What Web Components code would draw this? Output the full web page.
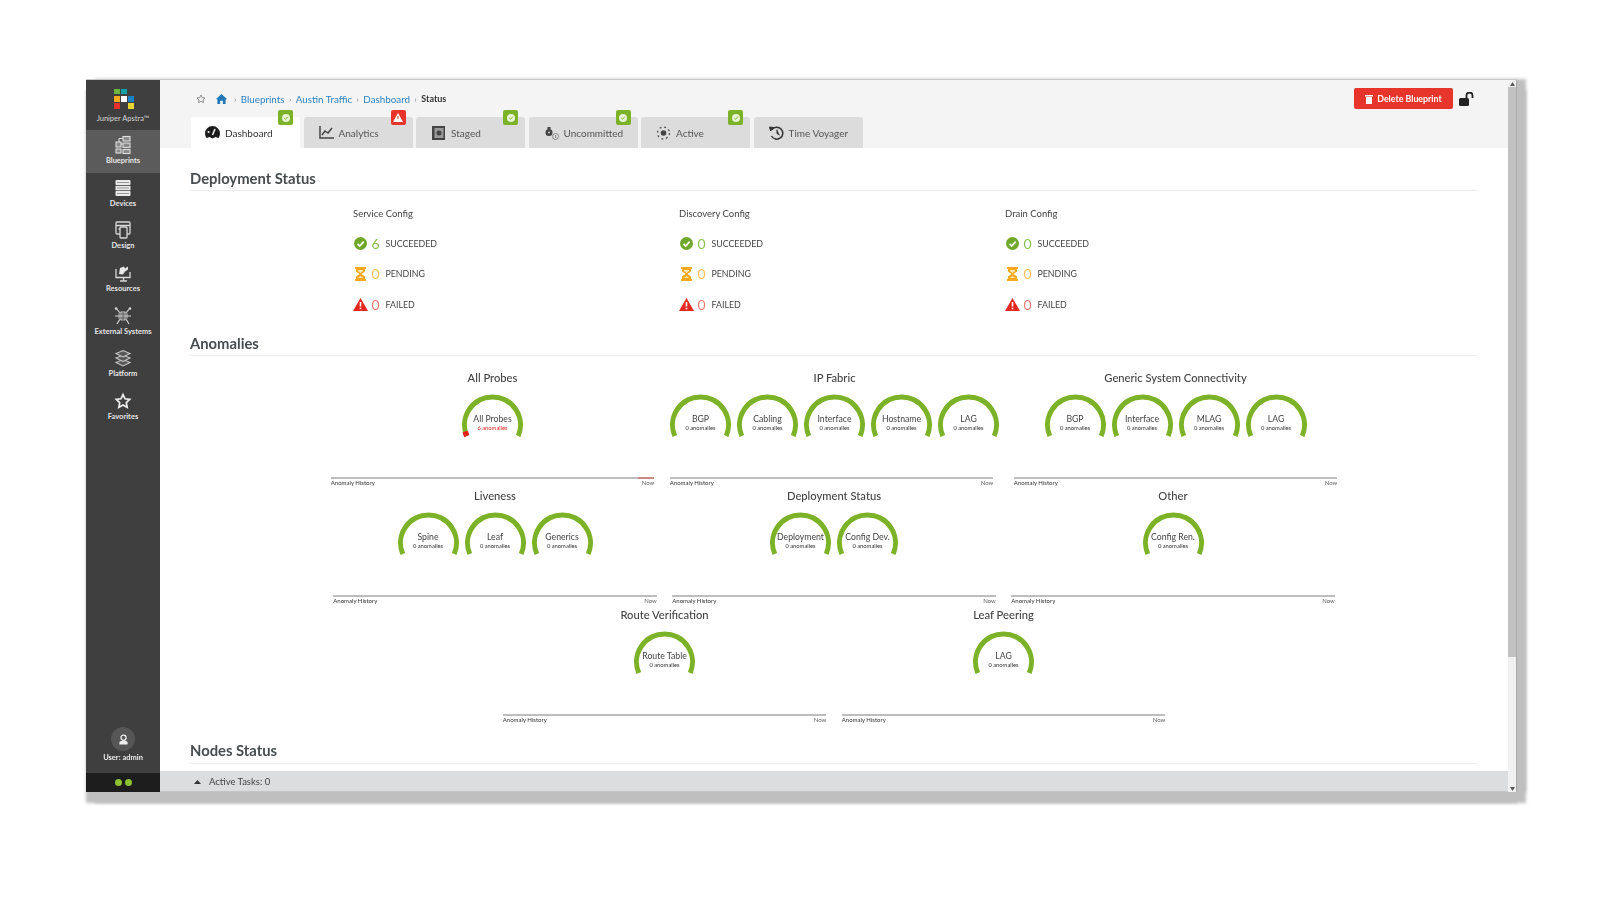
<!DOCTYPE html>
<html>
<head>
<meta charset="utf-8">
<title>Status</title>
<style>
  html, body { margin: 0; background: #fff; }
  body { font-family: Lato, "Open Sans", sans-serif; color: #3f4446; height: 900px; overflow: hidden; }
</style>
</head>
<body>
<app-shell>
  <side-nav slot="nav"></side-nav>
  <top-bar slot="top"></top-bar>
  <section-head>Deployment Status</section-head>
  <deploy-grid>
    <deploy-col title="Service Config" ok="6"></deploy-col>
    <deploy-col title="Discovery Config" ok="0"></deploy-col>
    <deploy-col title="Drain Config" ok="0"></deploy-col>
  </deploy-grid>
  <section-head class="anomalies">Anomalies</section-head>
  <anomaly-row>
    <anomaly-group title="All Probes" flagged>
      <an-gauge label="All Probes" sub="6 anomalies" alarm></an-gauge>
    </anomaly-group>
    <anomaly-group title="IP Fabric" shift>
      <an-gauge label="BGP"></an-gauge>
      <an-gauge label="Cabling"></an-gauge>
      <an-gauge label="Interface"></an-gauge>
      <an-gauge label="Hostname"></an-gauge>
      <an-gauge label="LAG"></an-gauge>
    </anomaly-group>
    <anomaly-group title="Generic System Connectivity" style="margin-left:5px">
      <an-gauge label="BGP"></an-gauge>
      <an-gauge label="Interface"></an-gauge>
      <an-gauge label="MLAG"></an-gauge>
      <an-gauge label="LAG"></an-gauge>
    </anomaly-group>
  </anomaly-row>
  <anomaly-row>
    <anomaly-group title="Liveness">
      <an-gauge label="Spine"></an-gauge>
      <an-gauge label="Leaf"></an-gauge>
      <an-gauge label="Generics"></an-gauge>
    </anomaly-group>
    <anomaly-group title="Deployment Status">
      <an-gauge label="Deployment"></an-gauge>
      <an-gauge label="Config Dev."></an-gauge>
    </anomaly-group>
    <anomaly-group title="Other">
      <an-gauge label="Config Ren."></an-gauge>
    </anomaly-group>
  </anomaly-row>
  <anomaly-row>
    <anomaly-group title="Route Verification">
      <an-gauge label="Route Table"></an-gauge>
    </anomaly-group>
    <anomaly-group title="Leaf Peering">
      <an-gauge label="LAG"></an-gauge>
    </anomaly-group>
  </anomaly-row>
  <section-head class="nodes">Nodes Status</section-head>
  <tasks-bar slot="bottom"></tasks-bar>
</app-shell>

<script>
class AppShell extends HTMLElement {
  connectedCallback() {
    this.attachShadow({ mode: 'open' });
    this.shadowRoot.innerHTML = `
      <style>
        :host {
          display: flex;
          width: 1431px;
          height: 713px;
          margin: 79px 0 0 86px;
          box-sizing: border-box;
          background: #fff;
          border-top: 1px solid #c9c9c9;
          box-shadow: 9px 0 3px #bfbfbf, 0 11px 3px #bfbfbf, 9px 11px 3px #bfbfbf;
          filter: blur(0.6px);
        }
        .main {
          flex: 1;
          min-width: 0;
          display: flex;
          flex-direction: column;
        }
        .content {
          flex: 1;
          overflow: hidden;
          padding: 20px 30px 0;
        }
        .scroll {
          width: 9px;
          box-sizing: border-box;
          background: #f1f1f1;
          border-right: 1px solid #a9a9a9;
          display: flex;
          flex-direction: column;
          align-items: center;
        }
        .arrow {
          height: 7px;
          flex: none;
          display: flex;
          align-items: center;
          justify-content: center;
        }
        .thumb { width: 100%; height: 570px; background: #c1c1c1; }
        .rest { flex: 1; }
      </style>
      <slot name="nav"></slot>
      <div class="main">
        <slot name="top"></slot>
        <div class="content"><slot></slot></div>
        <slot name="bottom"></slot>
      </div>
      <div class="scroll">
        <div class="arrow"><svg width="5" height="4" viewBox="0 0 5 4"><path d="M2.5 0 5 4H0z" fill="#555"/></svg></div>
        <div class="thumb"></div>
        <div class="rest"></div>
        <div class="arrow"><svg width="5" height="4" viewBox="0 0 5 4"><path d="M0 0h5L2.5 4z" fill="#555"/></svg></div>
      </div>
    `;
  }
}
customElements.define('app-shell', AppShell);

const navIcons = {
  blueprints: `<g fill="#8a8a8a" stroke="#dedede" stroke-width="1.100"><rect x="3" y="7" width="5" height="5"/><rect x="10" y="1.500" width="7" height="4.500"/><rect x="10" y="8" width="7" height="4.500"/><rect x="10" y="14.500" width="7" height="4"/><rect x="3" y="14" width="5" height="4"/><path d="M8 9h2M6 3.500h4M6 3.500v3.500" fill="none"/></g>`,
  devices: `<g fill="#e8e8e8"><rect x="2.500" y="2" width="15" height="5" rx="1"/><rect x="2.500" y="7.800" width="15" height="4.500"/><rect x="2.500" y="13" width="15" height="5" rx="1"/></g><path d="M4 4.500h12M4 10h12M4 15.500h12" stroke="#777" stroke-width=".7"/>`,
  design: `<g fill="none" stroke="#d8d8d8" stroke-width="1.300"><rect x="3" y="2" width="14" height="12" rx="1"/><rect x="7" y="7" width="7" height="11" rx="1" fill="#3f3f3f"/><path d="M3 5.500h14M5.500 9h1.500"/></g>`,
  resources: `<g fill="none" stroke="#d8d8d8" stroke-width="1.300"><path d="M3 6v8.500h14V9M7 18h7M10.500 14.500V18"/></g><path d="M6 11l1-6 4-1.500 1 2 3-2v3l-3 2-2 3z" fill="#e8e8e8"/>`,
  external: `<g stroke="#d8d8d8" stroke-width="1.200" fill="none"><path d="M3 2l4 5M17 2l-4 5M2 10h4M18 10h-4M4 18l3-5M16 18l-3-5"/></g><circle cx="10" cy="10" r="5" fill="#a8a8a8"/><path d="M6 8h8M6 12h8M10 5v10" stroke="#555" stroke-width=".8"/><circle cx="3" cy="2.500" r="1.200" fill="#ddd"/><circle cx="17" cy="2.500" r="1.200" fill="#ddd"/>`,
  platform: `<g fill="#5a5a5a" stroke="#c8c8c8" stroke-width="1.100"><path d="M10 11.500l7 3-7 3.500-7-3.500z"/><path d="M10 7l7 3-7 3.500L3 10z"/><path d="M10 2.500l7 3-7 3.500-7-3.500z"/></g>`,
  favorites: `<path d="M10 3.500l2 4.300 4.700.6-3.400 3.200.9 4.700-4.200-2.300-4.200 2.300.9-4.700-3.400-3.200 4.700-.6z" fill="none" stroke="#eee" stroke-width="1.700"/>`
};

class SideNav extends HTMLElement {
  connectedCallback() {
    this.attachShadow({ mode: 'open' });
    const items = [
      ['blueprints', 'Blueprints'], ['devices', 'Devices'], ['design', 'Design'],
      ['resources', 'Resources'], ['external', 'External Systems'], ['platform', 'Platform'], ['favorites', 'Favorites']
    ];
    this.shadowRoot.innerHTML = `
      <style>
        :host {
          display: flex;
          flex-direction: column;
          width: 74px;
          height: 100%;
          flex: none;
          background: #3f3f3f;
          color: #e6e6e6;
          font-size: 7.500px;
          font-weight: 700;
          text-align: center;
        }
        .logo {
          height: 50.300px;
          display: flex;
          flex-direction: column;
          align-items: center;
          padding-top: 9px;
          box-sizing: border-box;
          color: #d5d5d5;
          font-size: 7.500px;
          font-weight: 400;
          gap: 5px;
        }
        .logo svg { margin-left: 1px; }
        .item {
          height: 42.650px;
          display: flex;
          flex-direction: column;
          align-items: center;
          justify-content: flex-end;
          padding-bottom: 8px;
          box-sizing: border-box;
        }
        .item.active { background: #5b5b5b; }
        .item svg { margin-bottom: 1px; }
        svg { display: block; }
        .spacer { flex: 1; }
        .user {
          display: flex;
          flex-direction: column;
          align-items: center;
          gap: 2px;
          padding-bottom: 11px;
          color: #eee;
        }
        .avatar {
          width: 24px;
          height: 24px;
          border-radius: 50%;
          background: #565656;
          display: flex;
          align-items: center;
          justify-content: center;
        }
        .status {
          height: 19px;
          background: #1d1d1d;
          display: flex;
          align-items: center;
          justify-content: center;
          gap: 3px;
        }
        .status i { width: 7px; height: 7px; border-radius: 50%; background: #8cc230; }
      </style>
      <div class="logo">
        <svg width="20" height="20" viewBox="0 0 20 20">
          <rect x="0" y="0" width="6" height="5" fill="#6db33f"/><rect x="7" y="0" width="6" height="5" fill="#11a3a8"/>
          <rect x="0" y="7" width="6" height="6" fill="#f7a81b"/><rect x="7" y="7" width="6" height="6" fill="#fff"/><rect x="14" y="7" width="6" height="6" fill="#1a82c4"/>
          <rect x="0" y="14" width="6" height="6" fill="#e5312b"/><rect x="14" y="14" width="6" height="6" fill="#e8d52f"/>
        </svg>
        <span>Juniper Apstra™</span>
      </div>
      ${items.map(([k, label], i) => `
        <div class="item ${i === 0 ? 'active' : ''}">
          <svg width="20" height="20" viewBox="0 0 20 20">${navIcons[k]}</svg>
          <span>${label}</span>
        </div>`).join('')}
      <div class="spacer"></div>
      <div class="user">
        <div class="avatar">
          <svg width="11" height="11" viewBox="0 0 12 12"><circle cx="6" cy="4" r="2.800" fill="none" stroke="#eee" stroke-width="1.400"/><path d="M1.500 11.500V9.500q0-2 2-2h5q2 0 2 2v2z" fill="#eee"/></svg>
        </div>
        <span>User: admin</span>
      </div>
      <div class="status"><i></i><i></i></div>
    `;
  }
}
customElements.define('side-nav', SideNav);

class TopBar extends HTMLElement {
  connectedCallback() {
    this.attachShadow({ mode: 'open' });
    this.shadowRoot.innerHTML = `
      <style>
        :host {
          display: block;
          height: 68px;
          background: #f4f4f4;
          font-size: 9.800px;
        }
        .head {
          display: flex;
          align-items: center;
          justify-content: space-between;
          height: 21px;
          padding: 8px 33px 0 36px;
        }
        .crumbs { display: flex; align-items: center; color: #2b83bf; }
        .crumbs svg { display: block; }
        .sep { color: #777; margin: 0 4.500px; font-size: 8px; }
        .sep.first { margin-left: 7px; }
        .crumbs .now { color: #333; font-weight: 700; font-size: 9px; }
        .star { margin-right: 10px; }
        .right { display: flex; align-items: center; gap: 6px; }
        button {
          width: 99px;
          height: 21px;
          border: 0;
          border-radius: 2px;
          background: #e8352b;
          color: #fff;
          font: 700 8.800px Lato, sans-serif;
          display: flex;
          align-items: center;
          justify-content: center;
          gap: 4px;
          padding: 0;
        }
        .tabs {
          display: flex;
          gap: 3.500px;
          margin: 8px 0 0 31px;
        }
      </style>
      <div class="head">
        <div class="crumbs">
          <svg class="star" width="10" height="10" viewBox="0 0 20 20"><path d="M10 2l2.400 5.200 5.600.7-4.100 3.900 1.100 5.600L10 14.600l-5 2.800 1.100-5.600L2 7.900l5.600-.7z" fill="none" stroke="#777" stroke-width="1.600"/></svg>
          <svg width="11" height="10" viewBox="0 0 12 11"><path d="M6 0 12 5.500 10.500 6V11H7.500V7.500h-3V11h-3V6L0 5.500z" fill="#1f78b8"/></svg>
          <span class="sep first">›</span><span>Blueprints</span>
          <span class="sep">›</span><span>Austin Traffic</span>
          <span class="sep">›</span><span>Dashboard</span>
          <span class="sep">›</span><span class="now">Status</span>
        </div>
        <div class="right">
          <button>
            <svg width="8" height="10" viewBox="0 0 8 10"><path d="M0 1h8v1.500H0zM1 3h6v7H1z" fill="#fff"/></svg>
            Delete Blueprint
          </button>
          <svg width="16" height="14" viewBox="0 0 16 14"><rect x="0" y="6" width="10" height="8" rx="1.500" fill="#222"/><path d="M7.500 6V3.500a3 3 0 0 1 6 0V6" fill="none" stroke="#222" stroke-width="1.800"/></svg>
        </div>
      </div>
      <div class="tabs">
        <tab-item active badge="ok" label="Dashboard">
          <svg width="15" height="13" viewBox="0 0 15 13"><path d="M0 7.500a7.500 7.500 0 0 1 15 0q0 2.500-1.500 4.500l-3-1-3 1.500-3-1.500L1.500 12Q0 10 0 7.500z" fill="#1c1c1c"/><path d="M7.500 9 10 3" stroke="#fff" stroke-width="1.500"/><circle cx="3.500" cy="6" r="1" fill="#fff"/></svg>
        </tab-item>
        <tab-item badge="bad" label="Analytics">
          <svg width="15" height="13" viewBox="0 0 15 13"><path d="M1 0v12h14" fill="none" stroke="#444" stroke-width="1.500"/><path d="M3 9l3-4 3 2 4-5" fill="none" stroke="#444" stroke-width="1.500"/></svg>
        </tab-item>
        <tab-item badge="ok" label="Staged">
          <svg width="15" height="14" viewBox="0 0 15 14"><rect x="1" y="0" width="13" height="14" fill="#444"/><rect x="3.500" y="2" width="9" height="10" fill="#999"/><circle cx="8" cy="7" r="2.500" fill="#444"/></svg>
        </tab-item>
        <tab-item badge="ok" label="Uncommitted">
          <svg width="15" height="14" viewBox="0 0 15 14"><circle cx="5" cy="6.500" r="3.500" fill="#444"/><rect x="3.500" y="1" width="3" height="2.500" fill="#444"/><circle cx="5" cy="6.500" r="1" fill="#ccc"/><circle cx="11.500" cy="10.500" r="3" fill="none" stroke="#888"/><path d="M11.500 9v3" stroke="#888"/></svg>
        </tab-item>
        <tab-item badge="ok" label="Active">
          <svg width="15" height="14" viewBox="0 0 15 14"><circle cx="7.500" cy="7" r="2.800" fill="#444"/><circle cx="7.500" cy="7" r="6" fill="none" stroke="#555" stroke-width="1.300" stroke-dasharray="2 2.700"/></svg>
        </tab-item>
        <tab-item label="Time Voyager">
          <svg width="15" height="14" viewBox="0 0 15 14"><path d="M3 3.500A6 6 0 1 1 2.500 10" fill="none" stroke="#333" stroke-width="1.500"/><path d="M0.500 1 5 1.500 1.500 5zM8 3.500V7.500L10.500 9" fill="#333" stroke="#333" stroke-width="1"/></svg>
        </tab-item>
      </div>
    `;
  }
}
customElements.define('top-bar', TopBar);

class TabItem extends HTMLElement {
  connectedCallback() {
    this.attachShadow({ mode: 'open' });
    const badge = this.getAttribute('badge');
    const glyph = badge === 'bad'
      ? `<svg width="10" height="9" viewBox="0 0 10 9"><path d="M5 0l5 9H0z" fill="#fff"/><path d="M5 3v3" stroke="#e8352b"/></svg>`
      : `<svg width="8" height="8" viewBox="0 0 8 8"><circle cx="4" cy="4" r="4" fill="#e9f3d6"/><path d="M2.200 4l1.300 1.300 2.300-2.500" fill="none" stroke="#7cb228"/></svg>`;
    this.shadowRoot.innerHTML = `
      <style>
        :host {
          display: flex;
          align-items: center;
          position: relative;
          width: 109px;
          height: 31px;
          box-sizing: border-box;
          padding: 0 0 0 15px;
          gap: 5px;
          background: #dcdcdc;
          border-radius: 3px 3px 0 0;
          font-size: 10px;
          color: #555;
        }
        :host([active]) { background: #fff; padding-left: 14px; color: #333; }
        .badge {
          position: absolute;
          top: -7px;
          right: 7px;
          width: 15px;
          height: 15px;
          border-radius: 2px;
          background: ${badge === 'bad' ? '#e8352b' : '#7cb228'};
          display: flex;
          align-items: center;
          justify-content: center;
        }
      </style>
      <slot></slot><span>${this.getAttribute('label')}</span>
      ${badge ? `<div class="badge">${glyph}</div>` : ''}
    `;
  }
}
customElements.define('tab-item', TabItem);

class SectionHead extends HTMLElement {
  connectedCallback() {
    this.attachShadow({ mode: 'open' });
    this.shadowRoot.innerHTML = `
      <style>
        :host {
          display: block;
          font-size: 14.800px;
          font-weight: 700;
          line-height: 20px;
          padding-bottom: 2px;
          border-bottom: 1px solid #ededed;
          color: #474c4f;
        }
        :host(.anomalies) { margin-top: 13px; margin-bottom: 12px; }
        :host(.nodes) { margin-top: 17px; padding-bottom: 3px; }
      </style>
      <slot></slot>
    `;
  }
}
customElements.define('section-head', SectionHead);

class DeployGrid extends HTMLElement {
  connectedCallback() {
    this.attachShadow({ mode: 'open' });
    this.shadowRoot.innerHTML = `
      <style>
        :host {
          display: grid;
          grid-template-columns: repeat(3, 326px);
          padding: 15px 0 0 163px;
        }
      </style>
      <slot></slot>
    `;
  }
}
customElements.define('deploy-grid', DeployGrid);

class DeployCol extends HTMLElement {
  connectedCallback() {
    this.attachShadow({ mode: 'open' });
    const ok = this.getAttribute('ok');
    this.shadowRoot.innerHTML = `
      <style>
        :host { display: block; font-size: 9.500px; color: #444; }
        .title { height: 16px; line-height: 16px; margin-bottom: 6px; }
        .row { height: 30.500px; display: flex; align-items: center; font-size: 8.800px; }
        .icon { width: 15px; display: flex; justify-content: center; }
        .num { width: 17.500px; padding-left: 3.500px; box-sizing: border-box; font-size: 14px; }
        .good { color: #8cbf4e; }
        .wait { color: #f9c05f; }
        .bad { color: #ee7d77; }
        svg { display: block; }
      </style>
      <div class="title">${this.getAttribute('title')}</div>
      <div class="row">
        <span class="icon"><svg width="13" height="13" viewBox="0 0 13 13"><circle cx="6.500" cy="6.500" r="6.500" fill="#6fa82a"/><path d="M3.500 6.800l2.200 2.200 4-4.300" fill="none" stroke="#fff" stroke-width="1.700"/></svg></span>
        <span class="num good">${ok}</span><span>SUCCEEDED</span>
      </div>
      <div class="row">
        <span class="icon"><svg width="11" height="14" viewBox="0 0 11 14"><path d="M0 0h11v2h-1v2.500L6.500 7 10 9.500V12h1v2H0v-2h1V9.500L4.500 7 1 4.500V2H0z" fill="#f7a81b"/><path d="M3 3h5v1L5.500 6 3 4zM5.500 9 8 11H3z" fill="#fff" opacity=".7"/></svg></span>
        <span class="num wait">0</span><span>PENDING</span>
      </div>
      <div class="row">
        <span class="icon"><svg width="15" height="13" viewBox="0 0 15 13"><path d="M7.500 0l7.500 13H0z" fill="#e3291f"/><path d="M7.500 4v4.500M7.500 9.800v1.500" stroke="#fff" stroke-width="1.600"/></svg></span>
        <span class="num bad">0</span><span>FAILED</span>
      </div>
    `;
  }
}
customElements.define('deploy-col', DeployCol);

class AnomalyRow extends HTMLElement {
  connectedCallback() {
    this.attachShadow({ mode: 'open' });
    this.shadowRoot.innerHTML = `
      <style>
        :host { display: flex; justify-content: center; gap: 15.500px; margin: 0 -30px; }
      </style>
      <slot></slot>
    `;
  }
}
customElements.define('anomaly-row', AnomalyRow);

class AnomalyGroup extends HTMLElement {
  connectedCallback() {
    this.attachShadow({ mode: 'open' });
    const shift = this.hasAttribute('shift') ? 6 : 0;
    this.shadowRoot.innerHTML = `
      <style>
        :host {
          display: block;
          width: 323.500px;
          height: 118.500px;
          text-align: center;
        }
        .title { height: 20px; line-height: 20px; font-size: 11.200px; font-weight: 500; color: #444; padding-left: ${shift}px; }
        .gauges { display: flex; justify-content: center; gap: 6px; margin-top: 4px; height: 50px; padding-left: ${shift}px; }
        .line {
          margin-top: 35px;
          height: 2px;
          background: ${this.hasAttribute('flagged') ? 'linear-gradient(to right,#bdbdbd 95%,#c98a86 95%)' : '#bdbdbd'};
        }
        .hist {
          display: flex;
          justify-content: space-between;
          font-size: 6px;
          line-height: 8px;
          color: #333;
        }
        .now { color: #666; }
      </style>
      <div class="title">${this.getAttribute('title')}</div>
      <div class="gauges"><slot></slot></div>
      <div class="line"></div>
      <div class="hist"><span>Anomaly History</span><span class="now">Now</span></div>
    `;
  }
}
customElements.define('anomaly-group', AnomalyGroup);

class AnGauge extends HTMLElement {
  connectedCallback() {
    this.attachShadow({ mode: 'open' });
    const alarm = this.hasAttribute('alarm');
    const sub = this.getAttribute('sub') || '0 anomalies';
    this.shadowRoot.innerHTML = `
      <style>
        :host {
          display: grid;
          width: 61px;
          height: 50px;
          justify-items: center;
          color: #444;
        }
        svg, .txt { grid-area: 1 / 1; }
        .txt { padding-top: 22px; white-space: nowrap; }
        .lab { font-size: 8.700px; line-height: 10px; }
        .sub { font-size: 5.800px; line-height: 7px; color: ${alarm ? '#e3291f' : '#333'}; }
      </style>
      <svg width="61" height="50" viewBox="0 0 61 50">
        <path d="M4.800 44A28 28 0 1 1 56.200 44" fill="none" stroke="#7cb228" stroke-width="5"/>
        ${alarm ? '<path d="M4.800 44A28 28 0 0 1 3.200 39.500" fill="none" stroke="#e8201b" stroke-width="5.500"/>' : ''}
      </svg>
      <div class="txt"><div class="lab">${this.getAttribute('label')}</div><div class="sub">${sub}</div></div>
    `;
  }
}
customElements.define('an-gauge', AnGauge);

class TasksBar extends HTMLElement {
  connectedCallback() {
    this.attachShadow({ mode: 'open' });
    this.shadowRoot.innerHTML = `
      <style>
        :host {
          display: flex;
          align-items: center;
          gap: 8px;
          height: 21px;
          flex: none;
          padding: 1px 0 0 34px;
          background: #dcddde;
          border-bottom: 1px solid #c4c4c4;
          box-sizing: border-box;
          font-size: 9.500px;
          color: #444;
        }
      </style>
      <svg width="7" height="4" viewBox="0 0 7 4"><path d="M3.500 0 7 4H0z" fill="#333"/></svg>
      <span>Active Tasks: 0</span>
    `;
  }
}
customElements.define('tasks-bar', TasksBar);
</script>
</body>
</html>
